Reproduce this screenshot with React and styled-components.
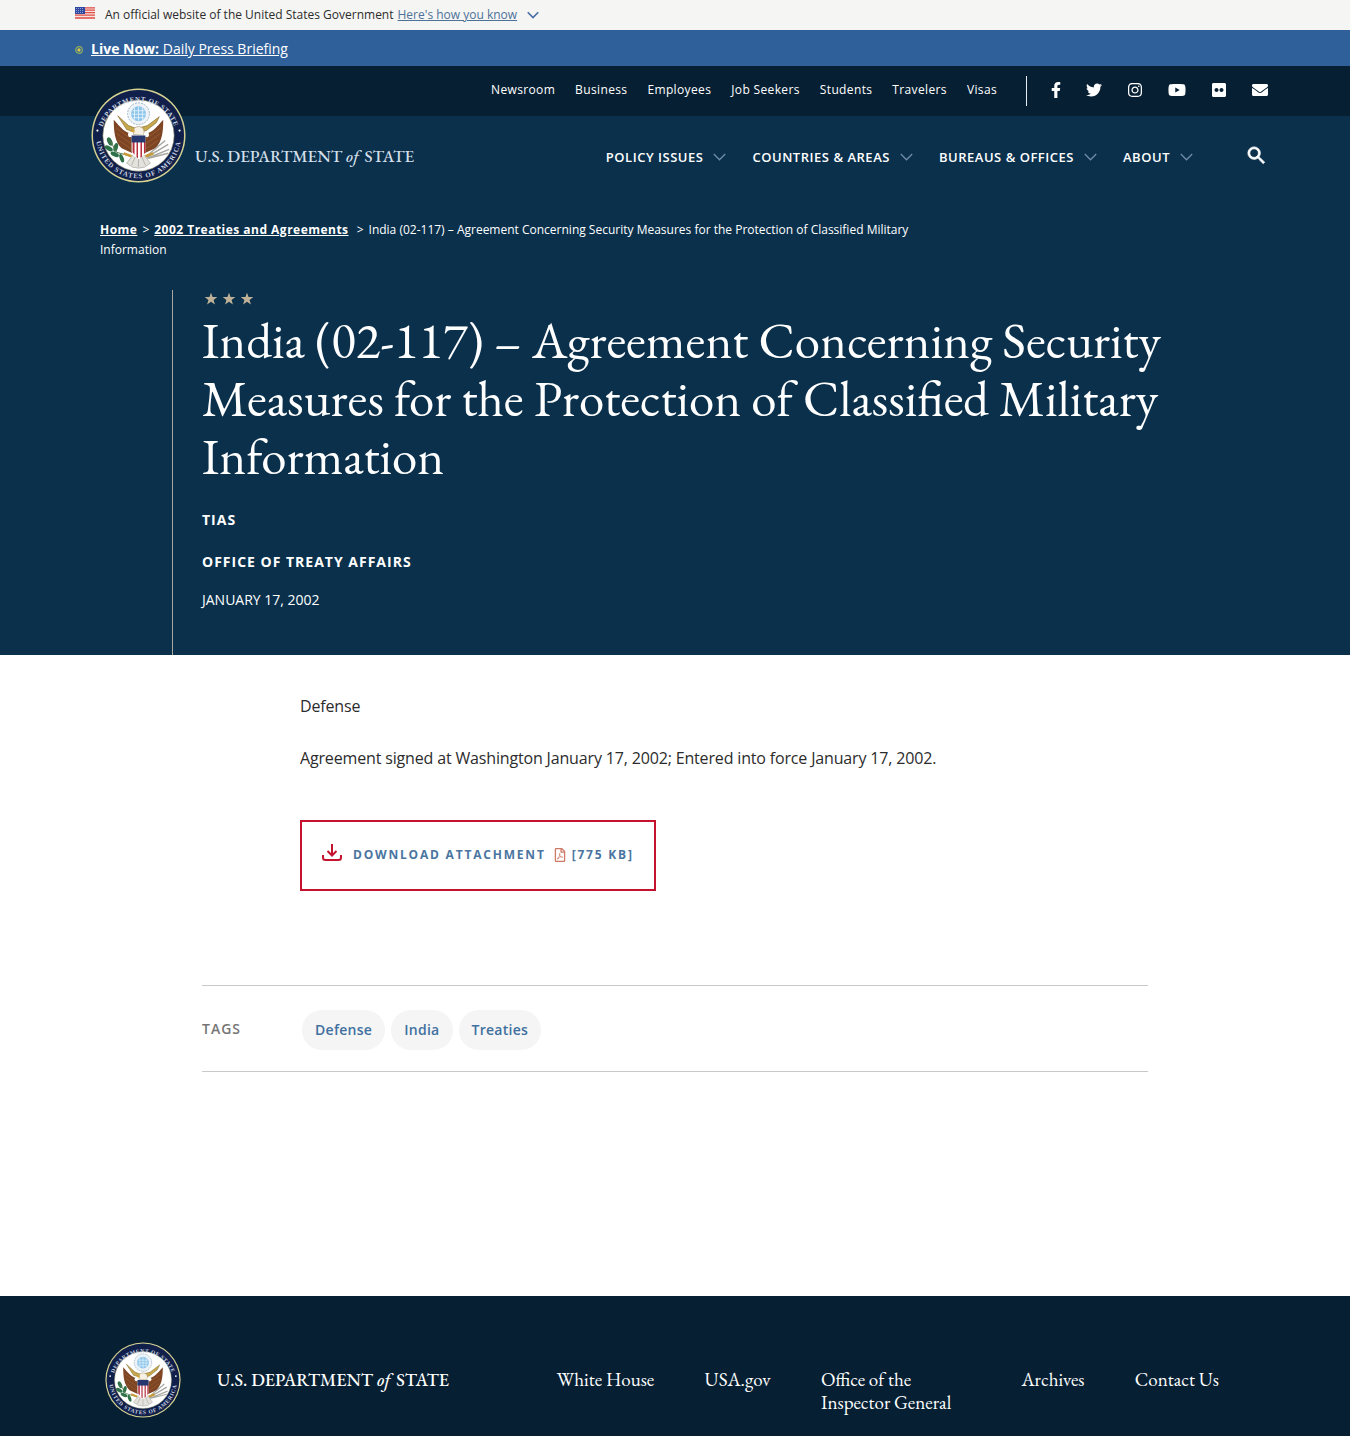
import React from "react";
import styled, { createGlobalStyle, css } from "styled-components";
import {
  FaEnvelope,
  FaFacebookF,
  FaFlickr,
  FaInstagram,
  FaRegFilePdf,
  FaTwitter,
  FaYoutube,
} from "react-icons/fa";
import { MdSearch } from "react-icons/md";

const sans = `"Open Sans", "Noto Sans", sans-serif`;
const serif = `"EB Garamond", "Liberation Serif", serif`;

const GlobalStyle = createGlobalStyle`
  *, *::before, *::after { box-sizing: border-box; }
  body {
    margin: 0;
    background: #fff;
    color: #2c2c2c;
    font-family: ${sans};
    font-size: 16px;
  }
  a { color: inherit; }
`;

const Container = styled.div`
  width: 100%;
  max-width: 1200px;
  margin: 0 auto;
`;

/* Government banner */

const GovBanner = styled.div`
  background: #f5f5f3;
`;

const GovBannerInner = styled(Container)`
  display: flex;
  align-items: center;
  height: 30px;
  font-size: 12px;
  line-height: 16px;
`;

const Flag = styled.svg`
  width: 20px;
  height: 12px;
  margin: 0 10px 4px 0;
`;

const Disclosure = styled.button`
  display: flex;
  align-items: center;
  gap: 10px;
  margin-left: 4px;
  padding: 0;
  border: 0;
  background: none;
  color: #4d7299;
  font: inherit;
  cursor: pointer;

  span { text-decoration: underline; }
`;

/* Live announcement */

const LiveBar = styled.div`
  background: #2f609a;
  color: #fff;
`;

const LiveInner = styled(Container)`
  display: flex;
  align-items: center;
  gap: 8px;
  height: 36px;
  padding-top: 2px;
  font-size: 14px;
  line-height: 20px;
`;

const LiveDot = styled.svg`
  width: 8px;
  height: 8px;
  margin-top: 2px;
`;

/* Masthead */

const Masthead = styled.header`
  position: relative;
`;

const UtilityBar = styled.div`
  background: #071f33;
  color: #fff;
`;

const UtilityInner = styled(Container)`
  display: flex;
  justify-content: flex-end;
  align-items: flex-start;
  height: 50px;
  padding: 10px 7px 0 0;
`;

const UtilityLinks = styled.nav`
  display: flex;
  gap: 20px;
  padding: 4px 29px 0 0;
  height: 30px;
  border-right: 1px solid #e8eef3;
  font-size: 12px;
  line-height: 20px;
  letter-spacing: 0.03em;

  a { text-decoration: none; }
`;

const SocialLinks = styled.nav`
  display: flex;
  align-items: center;
  gap: 25px;
  height: 28px;
  padding-left: 24px;

  a { display: flex; }
`;

const MainBar = styled.div`
  color: #fff;
`;

const MainInner = styled(Container)`
  display: flex;
  justify-content: flex-end;
  align-items: center;
  height: 82px;
  padding-right: 7px;
`;

const MainNav = styled.nav`
  display: flex;
  gap: 26px;
`;

const MenuButton = styled.button`
  display: flex;
  align-items: center;
  gap: 10px;
  padding: 0;
  border: 0;
  background: none;
  color: #fff;
  font: 600 13px/20px ${sans};
  letter-spacing: 0.04em;
  text-transform: uppercase;
  cursor: pointer;
`;

const SearchButton = styled.button`
  display: flex;
  margin: 0 0 4px 52px;
  padding: 0;
  border: 0;
  background: none;
  color: #fff;
  cursor: pointer;

  path:last-child {
    stroke: currentColor;
    stroke-width: 0.8;
  }
`;

const BrandLayer = styled(Container)`
  position: absolute;
  top: 22px;
  left: 0;
  right: 0;
  padding-left: 16px;
  pointer-events: none;
`;

const Brand = styled.a`
  display: inline-flex;
  align-items: center;
  gap: ${({ $gap }) => $gap};
  color: ${({ $muted }) => ($muted ? "#d3dfe8" : "#fff")};
  text-decoration: none;
  pointer-events: auto;
`;

const SealArt = styled.svg`
  flex: none;
  width: ${({ $size }) => $size};
  height: ${({ $size }) => $size};
`;

const Wordmark = styled.span`
  font: 500 ${({ $size }) => $size}/24px ${serif};
  white-space: nowrap;
  ${({ $low }) => $low && css`padding-top: 40px;`}

  em { margin-right: 2px; }
`;

/* Article hero */

const Hero = styled.div`
  background: #0a304c;
  color: #fff;
`;

const Breadcrumbs = styled.nav`
  width: 100%;
  max-width: 1150px;
  margin: 0 auto;
  padding: 22px 320px 0 0;
  font-size: 12px;
  line-height: 20px;

  a {
    margin-right: 5px;
    font-weight: 700;
    letter-spacing: 0.04em;
  }
  span { margin-right: 5px; }
`;

const HeroBody = styled.div`
  width: 100%;
  max-width: 1006px;
  margin: 30px auto 0;
  padding: 3px 0 45px 29px;
  border-left: 1px solid #aaa69c;
`;

const Stars = styled.svg`
  display: block;
  width: 56px;
  height: 12px;
`;

const Title = styled.h1`
  margin: 6px 0 0;
  font: 400 51px/58px ${serif};
`;

const Meta = styled.p`
  margin: ${({ $gap }) => $gap} 0 0;
  font-size: 14px;
  line-height: 20px;
  text-transform: uppercase;
  ${({ $strong }) => $strong && css`
    font-weight: 700;
    letter-spacing: 1px;
  `}
`;

/* Article body */

const Article = styled.main`
  width: 100%;
  max-width: 946px;
  margin: 0 auto;
  padding: 37px 0 224px;
`;

const Copy = styled.div`
  padding-left: 98px;

  p {
    margin: 0 0 24px;
    line-height: 28px;
    letter-spacing: -0.01em;
  }
`;

const Download = styled.a`
  display: inline-flex;
  align-items: center;
  margin-top: 24px;
  height: 71px;
  padding: 0 20px 2px;
  border: 2px solid #c4122f;
  color: #4a75a0;
  font-size: 12px;
  font-weight: 700;
  line-height: 20px;
  letter-spacing: 0.15em;
  text-transform: uppercase;
  text-decoration: none;
`;

const DownloadIcon = styled.svg`
  width: 20px;
  height: 20px;
  margin: 0 11px 6px 0;
`;

const FileType = styled.span`
  display: flex;
  margin: 0 5px 0 7px;
  color: #cf7a68;
`;

const TagRow = styled.section`
  display: flex;
  align-items: center;
  height: 87px;
  margin-top: 94px;
  border-top: 1px solid #c8c8c8;
  border-bottom: 1px solid #c8c8c8;
`;

const TagHeading = styled.h2`
  width: 100px;
  margin: 0;
  color: #757575;
  font-size: 14px;
  font-weight: 600;
  letter-spacing: 1px;
`;

const TagList = styled.ul`
  display: flex;
  gap: 6px;
  margin: 0;
  padding: 2px 0 0;
  list-style: none;
`;

const Tag = styled.a`
  display: block;
  padding: 10px 13px;
  border-radius: 20px;
  background: #f5f5f5;
  color: #3f70a0;
  font-size: 14px;
  font-weight: 600;
  line-height: 20px;
  letter-spacing: 0.02em;
  text-decoration: none;
`;

/* Footer */

const Footer = styled.footer`
  background: #071f33;
  color: #fff;
`;

const FooterInner = styled.div`
  display: flex;
  align-items: flex-start;
  width: 100%;
  max-width: 1140px;
  min-height: 140px;
  margin: 0 auto;
  padding-top: 46px;
`;

const FooterLinks = styled.nav`
  display: flex;
  justify-content: space-between;
  flex: 1;
  margin: 26px 26px 0 108px;
  font: 19px/23px ${serif};

  a { text-decoration: none; }
`;

const FooterLink = styled.a`
  max-width: 150px;
`;

function Chevron({ color, size = 13 }) {
  return (
    <svg width={size} height="8" viewBox="0 0 13 8" fill="none" aria-hidden="true">
      <path d="M0.8 1 L6.5 6.8 L12.2 1" stroke={color} strokeWidth={size > 12 ? 1.3 : 1.8} />
    </svg>
  );
}

function Seal({ id, size }) {
  return (
    <SealArt $size={size} viewBox="0 0 96 96" role="img" aria-label="Seal">
      <defs>
        <path id={`${id}-top`} d="M9.5 52 A38.5 38.5 0 1 1 86.5 52" />
        <path id={`${id}-bottom`} d="M5.2 44 A43 43 0 1 0 90.8 44" />
      </defs>
      <circle cx="48" cy="48" r="47.5" fill="#d6d392" />
      <circle cx="48" cy="48" r="46" fill="#10204b" />
      <circle cx="48" cy="48" r="36" fill="#fff" stroke="#8f9270" strokeWidth="0.6" />
      <g fill="#c9d3e0" fontFamily="Liberation Serif, serif" fontSize="7" fontWeight="700" textAnchor="middle">
        <text letterSpacing="0.6"><textPath href={`#${id}-top`} startOffset="50%">DEPARTMENT OF STATE</textPath></text>
        <text letterSpacing="0.9"><textPath href={`#${id}-bottom`} startOffset="50%">UNITED STATES OF AMERICA</textPath></text>
      </g>
      <circle cx="6.5" cy="43" r="1.1" fill="#fff" />
      <circle cx="89.5" cy="43" r="1.1" fill="#fff" />
      {/* glory above the eagle */}
      <circle cx="48" cy="26" r="11" fill="#edf3f7" stroke="#9fb3c4" strokeWidth="1" strokeDasharray="2 1" />
      <circle cx="48" cy="26" r="7.5" fill="#8dc5ea" />
      <g stroke="#e9f5fc" strokeWidth="0.8" fill="none">
        <path d="M42 23 H54 M41 26.5 H55 M42.5 30 H53.5 M48 19 V33 M44 20 V32 M52 20 V32" />
      </g>
      {/* scroll */}
      <path d="M27 28 L38 38 L46 41 L57 38 L69 29 L66 35 L56 43 L47 45 L36 42 Z" fill="#c6a84f" stroke="#80652b" strokeWidth="0.6" />
      {/* wings */}
      <path d="M23 32 C23 44 24 54 31 61 L42 66 L42 46 C35 46 30 40 23 32 Z" fill="#7d4523" />
      <path d="M73 32 C73 44 72 54 65 61 L54 66 L54 46 C61 46 66 40 73 32 Z" fill="#7d4523" />
      <g stroke="#a4683a" strokeWidth="0.6" fill="none">
        <path d="M25 40 L40 51 M26 46 L40 56 M28 53 L40 61 M71 40 L56 51 M70 46 L56 56 M68 53 L56 61" />
      </g>
      {/* head and shoulders */}
      <path d="M43 47 C42 42 44 39 48 39 C52 39 55 42 53 48 Z" fill="#f5f0e3" stroke="#8d7752" strokeWidth="0.5" />
      <circle cx="40" cy="47" r="2.6" fill="#fff" />
      <circle cx="56" cy="47" r="2.6" fill="#fff" />
      <path d="M44 42 L39 44 L44 45 Z" fill="#d6a637" />
      {/* olive branch and arrows */}
      <g fill="#2f7148">
        <ellipse cx="19" cy="54" rx="2.4" ry="4.5" transform="rotate(-25 19 54)" />
        <ellipse cx="18" cy="61" rx="2.2" ry="4.5" transform="rotate(-60 18 61)" />
        <ellipse cx="25" cy="60" rx="2.2" ry="4.5" transform="rotate(15 25 60)" />
        <ellipse cx="24" cy="67" rx="2.2" ry="4.5" transform="rotate(-65 24 67)" />
        <ellipse cx="31" cy="71" rx="2" ry="4.5" transform="rotate(-20 31 71)" />
      </g>
      <path d="M19 53 L26 65 L40 69" fill="none" stroke="#52784e" strokeWidth="1" />
      <path d="M56 69 L75 53 M56 70 L78 57 M57 71 L79 62 M58 71 L78 66" stroke="#a5a7a0" strokeWidth="1.5" />
      <path d="M33 66 L41 69 M63 66 L55 69" stroke="#c89b35" strokeWidth="2.5" />
      {/* tail */}
      <path d="M43 67 L36 76 L42 80 L48 81 L54 80 L60 76 L53 67 Z" fill="#e4e2dc" stroke="#a9a69e" strokeWidth="0.7" />
      <path d="M45 69 L41 78 M48 69 V80 M51 69 L55 78" stroke="#a5a29a" strokeWidth="0.7" />
      {/* shield */}
      <path d="M41 48 H55 V63 C55 68 51 70 48 72 C45 70 41 68 41 63 Z" fill="#fff" />
      <path d="M42 54 H44 V67.5 L42 65 Z M46 54 H47.5 V71 L46 70 Z M50 54 H51.5 V69.5 L50 70.5 Z M53.5 54 H55 V65 L53.5 67 Z" fill="#b52c3c" />
      <path d="M41 48 H55 V55 H41 Z" fill="#26386f" />
    </SealArt>
  );
}

function BrandText({ size, low }) {
  return (
    <Wordmark $size={size} $low={low}>
      U.S. DEPARTMENT <em>of</em> STATE
    </Wordmark>
  );
}

const utilityLinks = ["Newsroom", "Business", "Employees", "Job Seekers", "Students", "Travelers", "Visas"];
const menus = ["Policy Issues", "Countries & Areas", "Bureaus & Offices", "About"];
const tags = ["Defense", "India", "Treaties"];
const footerLinks = ["White House", "USA.gov", "Office of the Inspector General", "Archives", "Contact Us"];
const social = [
  ["Facebook", FaFacebookF, 10],
  ["Twitter", FaTwitter, 16],
  ["Instagram", FaInstagram, 16],
  ["YouTube", FaYoutube, 18],
  ["Flickr", FaFlickr, 16],
  ["Email", FaEnvelope, 16],
];

export default function App() {
  return (
    <>
      <GlobalStyle />
      <GovBanner>
        <GovBannerInner>
          <Flag viewBox="0 0 20 12" aria-hidden="true">
            <rect width="20" height="12" fill="#f6e4e0" />
            <path d="M0 .8H20M0 3.2H20M0 5.6H20M0 8.2H20M0 11H20" stroke="#df4c45" strokeWidth="1.3" />
            <rect width="10" height="7" fill="#3049a0" />
            <path d="M1 1.5H9M1 3.5H9M1 5.5H9" stroke="#a9b6e0" strokeWidth=".8" strokeDasharray="1 1" />
          </Flag>
          An official website of the United States Government
          <Disclosure type="button">
            <span>Here's how you know</span>
            <Chevron color="#4a6fa5" size={12} />
          </Disclosure>
        </GovBannerInner>
      </GovBanner>
      <LiveBar>
        <LiveInner>
          <LiveDot viewBox="0 0 8 8" aria-hidden="true">
            <circle cx="4" cy="4" r="3.3" fill="none" stroke="#8fae5b" strokeWidth="1.2" />
            <circle cx="4" cy="4" r="1.7" fill="#d9c94a" />
          </LiveDot>
          <a href="#live"><strong>Live Now:</strong> Daily Press Briefing</a>
        </LiveInner>
      </LiveBar>
      <Hero>
        <Masthead>
          <UtilityBar>
            <UtilityInner>
              <UtilityLinks aria-label="Audiences">
                {utilityLinks.map((label) => <a key={label} href="#top">{label}</a>)}
              </UtilityLinks>
              <SocialLinks aria-label="Social media">
                {social.map(([label, Icon, width]) => (
                  <a key={label} href="#social" aria-label={label}>
                    <Icon style={{ width, height: width === 18 ? 18 : 16 }} />
                  </a>
                ))}
              </SocialLinks>
            </UtilityInner>
          </UtilityBar>
          <MainBar>
            <MainInner>
              <MainNav aria-label="Main">
                {menus.map((label) => (
                  <MenuButton key={label} type="button">
                    {label}
                    <Chevron color="#6f8da8" />
                  </MenuButton>
                ))}
              </MainNav>
              <SearchButton type="button" aria-label="Search"><MdSearch size={23} /></SearchButton>
            </MainInner>
          </MainBar>
          <BrandLayer>
            <Brand href="#home" $gap="9px" $muted>
              <Seal id="header-seal" size="95px" />
              <BrandText size="17px" low />
            </Brand>
          </BrandLayer>
        </Masthead>
        <Breadcrumbs aria-label="Breadcrumb">
          <a href="#home">Home</a>
          <span>&gt;</span>
          <a href="#treaties">2002 Treaties and Agreements</a>{" "}
          <span>&gt;</span>
          India (02-117) – Agreement Concerning Security Measures for the Protection of Classified Military Information
        </Breadcrumbs>
        <HeroBody>
          <Stars viewBox="0 0 56 12" fill="#beb197" aria-hidden="true">
            {[9, 27, 45].map((x) => (
              <path key={x} transform={`translate(${x} 6) scale(1.12)`} d="M0-5.6 1.4-1.8 5.6-1.7 2.3.8 3.5 4.8 0 2.4-3.5 4.8-2.3.8-5.6-1.7-1.4-1.8Z" />
            ))}
          </Stars>
          <Title>India (02-117) – Agreement Concerning Security Measures for the Protection of Classified Military Information</Title>
          <Meta $gap="25px" $strong>TIAS</Meta>
          <Meta $gap="22px" $strong>Office of Treaty Affairs</Meta>
          <Meta $gap="18px">January 17, 2002</Meta>
        </HeroBody>
      </Hero>
      <Article>
        <Copy>
          <p>Defense</p>
          <p>Agreement signed at Washington January 17, 2002; Entered into force January 17, 2002.</p>
          <Download href="#attachment">
            <DownloadIcon viewBox="0 0 20 20" fill="none" stroke="#c4122f" strokeWidth="2" aria-hidden="true">
              <path d="M10 2V13M5.5 9 10 13.5 14.5 9M1 13V15.5Q1 18 3.5 18H16.5Q19 18 19 15.5V13" />
            </DownloadIcon>
            Download Attachment
            <FileType><FaRegFilePdf size={14} /></FileType>
            [775 KB]
          </Download>
        </Copy>
        <TagRow>
          <TagHeading>TAGS</TagHeading>
          <TagList>
            {tags.map((label) => <li key={label}><Tag href="#tag">{label}</Tag></li>)}
          </TagList>
        </TagRow>
      </Article>
      <Footer>
        <FooterInner>
          <Brand href="#home" $gap="36px">
            <Seal id="footer-seal" size="76px" />
            <BrandText size="18px" />
          </Brand>
          <FooterLinks aria-label="Footer">
            {footerLinks.map((label) => <FooterLink key={label} href="#footer">{label}</FooterLink>)}
          </FooterLinks>
        </FooterInner>
      </Footer>
    </>
  );
}
